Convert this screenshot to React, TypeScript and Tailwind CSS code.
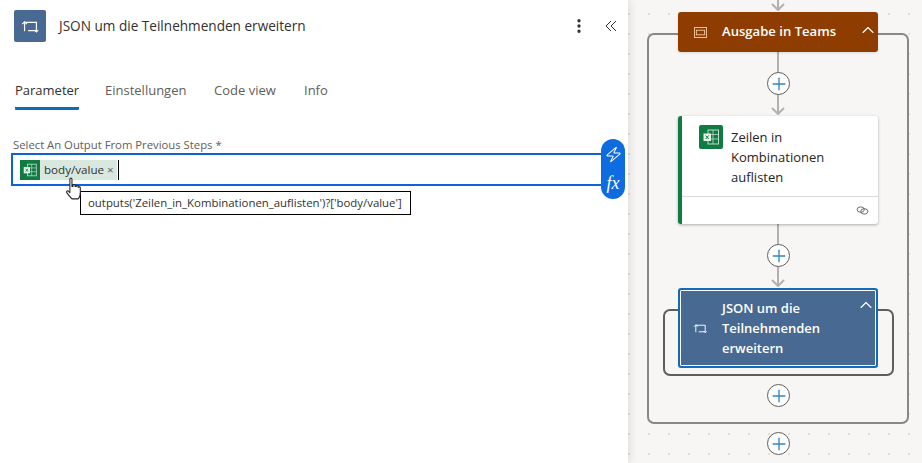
import { ChevronUp, MoreVertical, Plus, Zap } from 'lucide-react';

const font = { fontFamily: '"Open Sans", "Noto Sans", sans-serif' };

// Loop icon, used in the panel header and on the node
function LoopIcon({ className }: { className?: string }) {
  return (
    <svg viewBox="0 0 16 16" fill="none" stroke="currentColor" strokeWidth="1" className={className}>
      <path d="M3 12V4.500h10V11.500H6" />
      <path d="M1 6l2-2 2 2" />
      <path d="M11.500 11l1.500 1.500 1.500-1.500" />
    </svg>
  );
}

function ExcelIcon({ className }: { className?: string }) {
  return (
    <svg viewBox="0 0 24 24" className={className}>
      <rect x="9" y="5" width="10.500" height="14" fill="none" stroke="#cfe6d8" strokeWidth="0.9" />
      <path d="M14 5v14M9 9.500h10.500M9 14h10.500" stroke="#cfe6d8" strokeWidth="0.7" />
      <rect x="4.500" y="8.500" width="7.500" height="7.500" fill="#e8f3ec" />
      <path d="M6.700 10.500l3 3.500M9.700 10.500l-3 3.500" stroke="#107c41" strokeWidth="1" />
    </svg>
  );
}

function AddButton({ top }: { top: string }) {
  return (
    <div className={`absolute left-[767px] ${top} w-[23px] h-[23px] rounded-full bg-white border border-[#605e5c] flex items-center justify-center`}>
      <Plus className="w-[20px] h-[20px] text-[#2f86c5]" strokeWidth={1.6} />
    </div>
  );
}

function Line({ className }: { className: string }) {
  return <div className={`absolute left-[777px] w-[2px] bg-[#b3b0ad] ${className}`} />;
}

function Arrow({ top }: { top: string }) {
  return (
    <svg viewBox="0 0 14 8" className={`absolute left-[771px] ${top} w-[14px] h-[8px]`} fill="none" stroke="#b3b0ad" strokeWidth="2">
      <path d="M1 1l6 6 6-6" />
    </svg>
  );
}

const tabs = [
  { label: 'Einstellungen', width: 'w-[83px]' },
  { label: 'Code view', width: 'w-[64px]' },
  { label: 'Info', width: 'w-[24px]' },
];

export default function App() {
  return (
    <div style={font} className="relative w-[922px] h-[463px] overflow-hidden bg-[#f7f6f5] flex">
      {/* Canvas dots */}
      <div className="absolute inset-0 bg-[radial-gradient(#e1dfdd_1px,transparent_1.2px)] bg-[length:20px_20px] bg-[position:-1px_4px]" />

      {/* Scope outlines */}
      <div className="absolute left-[647px] top-[33px] w-[262px] h-[391px] rounded-[7px] border-2 border-[#8a8886] bg-[#f7f6f5]" />
      <div className="absolute left-[663px] top-[309px] w-[231px] h-[67px] rounded-[7px] border-2 border-[#605e5c]" />

      {/* Connectors */}
      <Line className="top-0 h-[10px]" />
      <Arrow top="top-[3px]" />
      <Line className="top-[52px] h-[62px]" />
      <Arrow top="top-[107px]" />
      <Line className="top-[224px] h-[62px]" />
      <Arrow top="top-[279px]" />
      <AddButton top="top-[72px]" />
      <AddButton top="top-[244px]" />
      <AddButton top="top-[384px]" />
      <AddButton top="top-[432px]" />

      {/* Ausgabe in Teams */}
      <div className="absolute left-[678px] top-[12px] w-[200px] h-[40px] rounded-[3px] bg-[#8f3c00] text-white flex items-center shadow">
        <svg viewBox="0 0 14 12" className="ml-[16px] w-[13px] h-[11px] text-[#f2c9a0]" fill="none" stroke="currentColor" strokeWidth="1">
          <rect x="0.5" y="0.5" width="13" height="11" />
          <rect x="2.5" y="3.5" width="9" height="5" />
        </svg>
        <span className="ml-[15px] text-[13.1px] font-semibold">Ausgabe in Teams</span>
        <ChevronUp className="absolute right-[0px] top-[8px] w-[20px] h-[20px]" strokeWidth={1.3} />
      </div>

      {/* Zeilen in Kombinationen auflisten */}
      <div className="absolute left-[678px] top-[116px] w-[200px] h-[108px] rounded-[3px] bg-white border-l-4 border-[#107c41] shadow-[0_1px_3px_rgba(0,0,0,0.3)] flex flex-col">
        <div className="h-[81px] flex border-b border-[#dcdad8]">
          <div className="ml-[17px] mt-[9px] w-[24px] h-[24px] rounded-[2px] bg-[#107c41] shrink-0">
            <ExcelIcon className="w-[24px] h-[24px]" />
          </div>
          <div className="ml-[8px] mt-[11px] text-[13px] leading-[20px] text-[#242424] font-medium">
            Zeilen in
            <br />
            Kombinationen
            <br />
            auflisten
          </div>
        </div>
        <div className="flex-1 flex items-center justify-end pr-[9px]">
          <svg viewBox="0 0 14 10" className="w-[13px] h-[9px]" fill="none" stroke="#605e5c" strokeWidth="1">
            <ellipse cx="5" cy="4" rx="4" ry="3" />
            <ellipse cx="9" cy="6" rx="4" ry="3" />
          </svg>
        </div>
      </div>

      {/* JSON um die Teilnehmenden erweitern (selected) */}
      <div className="absolute left-[678px] top-[288px] w-[200px] h-[80px] rounded-[3px] bg-[#486991] border-2 border-[#0f6cbd] text-white flex items-center outline outline-1 outline-white outline-offset-[-3px]">
        <LoopIcon className="ml-[13px] w-[15px] h-[15px] text-white" />
        <span className="ml-[14px] text-[13px] leading-[20px] font-semibold">
          JSON um die
          <br />
          Teilnehmenden
          <br />
          erweitern
        </span>
        <ChevronUp className="absolute right-[0px] top-[5px] w-[20px] h-[20px]" strokeWidth={1.3} />
      </div>

      {/* Left panel */}
      <aside className="relative w-[628px] h-full bg-white shadow-[2px_0_8px_rgba(0,0,0,0.1)] shrink-0">
        <header className="h-[52px] pl-[14px] pt-[10px] flex items-start">
          <div className="w-[32px] h-[32px] rounded-[2px] bg-[#486991] flex items-center justify-center text-white">
            <LoopIcon className="w-[19px] h-[19px]" />
          </div>
          <h1 className="ml-[13px] mt-[6px] text-[13.6px] leading-[20px] text-[#323130] font-medium">
            JSON um die Teilnehmenden erweitern
          </h1>
          <MoreVertical className="ml-auto mt-[7px] w-[18px] h-[18px] text-[#323130]" strokeWidth={2.4} />
          <svg viewBox="0 0 12 12" className="ml-[17px] mr-[11px] mt-[10px] w-[12px] h-[12px]" fill="none" stroke="#323130" strokeWidth="1">
            <path d="M6 1L1 6l5 5" />
            <path d="M11 1L6 6l5 5" />
          </svg>
        </header>

        <nav className="mt-[24px] ml-[15px] flex gap-[26px] text-[13px] leading-[28px] text-[#605e5c]">
          <div className="h-[34px] w-[64px] border-b-[3px] border-[#0f6cbd] text-[#323130] font-medium rounded-b-[1px] whitespace-nowrap">
            Parameter
          </div>
          {tabs.map((tab) => (
            <div key={tab.label} className={`${tab.width} whitespace-nowrap`}>
              {tab.label}
            </div>
          ))}
        </nav>

        <div className="mt-[27px] ml-[13px] text-[11.3px] leading-[16px] text-[#605e5c]">
          Select An Output From Previous Steps *
        </div>

        <div className="relative ml-[11px] w-[592px] h-[33px] border-[2px] border-[#0f62d8] flex items-center pl-[7px]">
          <div className="h-[20px] flex items-center bg-[#d8e8df] text-[11.6px] text-[#323130] rounded-[1px]">
            <div className="w-[20px] h-[20px] bg-[#107c41]">
              <ExcelIcon className="w-[20px] h-[20px]" />
            </div>
            <span className="ml-[4px] whitespace-nowrap">body/value</span>
            <span className="ml-[3px] mr-[3px] text-[#605e5c]">×</span>
          </div>
          <div className="ml-[1px] w-px h-[20px] bg-black" />
        </div>

        {/* Token picker pill */}
        <div className="absolute left-[601px] top-[139px] w-[24px] h-[60px] rounded-[12px] bg-[#0f6ce0] flex flex-col items-center justify-around py-[2px] text-white">
          <Zap className="w-[17px] h-[17px] -skew-x-12" strokeWidth={1.5} />
          <span className="text-[18px] leading-[18px] italic" style={{ fontFamily: '"Liberation Serif", serif' }}>
            fx
          </span>
        </div>

        {/* Tooltip */}
        <div className="absolute left-[80px] top-[191px] h-[24px] w-[331px] border border-black bg-white text-[11.4px] leading-[22px] text-[#323130] pl-[7px] whitespace-nowrap">
          outputs('Zeilen_in_Kombinationen_auflisten')?['body/value']
        </div>

        {/* Hand cursor */}
        <svg viewBox="0 0 16 24" className="absolute left-[64px] top-[177px] w-[18px] h-[25px]" fill="#fff" stroke="#222" strokeWidth="1" strokeLinejoin="round">
          <path d="M5 2c0-1.3 2-1.300 2 0v7l1 0V8c0-1 2-1 2 0v1l1 0c0-1 2-1 2 0v1c0-.8 2-.8 2 0v5c0 3-1 5-2 6H7c-2-2-3-3-5-6-.7-1.400 1-2.500 2-1l1 1z" />
        </svg>
      </aside>
    </div>
  );
}
